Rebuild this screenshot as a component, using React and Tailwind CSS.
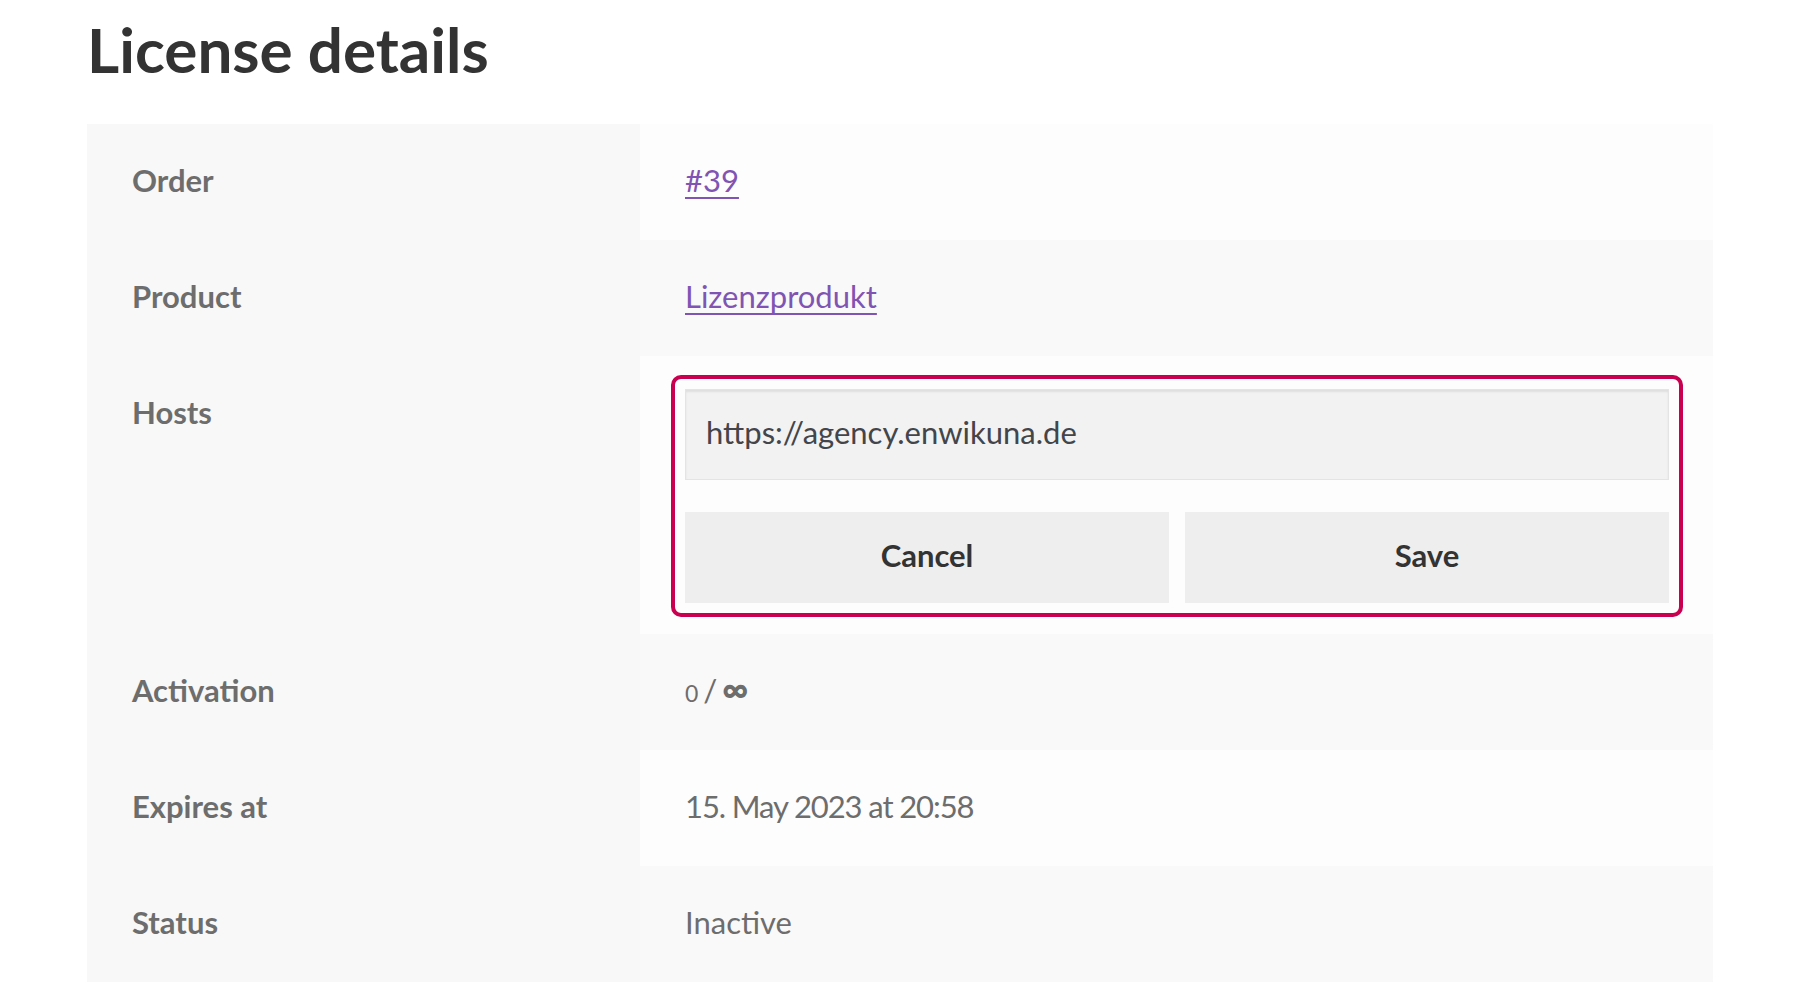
const rows = [
  { label: 'Order', value: <a href="#" className="text-[#7f54b3] underline underline-offset-[5px] decoration-2">#39</a> },
  { label: 'Product', value: <a href="#" className="text-[#7f54b3] underline underline-offset-[5px] decoration-2">Lizenzprodukt</a> },
  { label: 'Hosts', hosts: true },
  {
    label: 'Activation',
    value: (
      <span className="inline-flex h-[46px] items-baseline">
        <span className="text-[23px] leading-none">0</span>
        <span className="px-[5px] leading-none">/</span>
        <span className="text-[36px] font-black leading-none">∞</span>
      </span>
    ),
  },
  { label: 'Expires at', value: <span className="tracking-[-1.1px]">15. May 2023 at 20:58</span> },
  { label: 'Status', value: 'Inactive' },
]

function HostsForm() {
  return (
    <div className="-mx-[14px] -my-[14px] rounded-[10px] border-4 border-[#c8004f] p-[10px]">
      <input
        type="text"
        defaultValue="https://agency.enwikuna.de"
        className="block h-[91px] w-full border border-[#e4e4e4] bg-[#f2f2f2] px-[20px] pb-[6px] text-[31px] text-[#43454b] shadow-[inset_0_2px_2px_rgba(0,0,0,0.08)] outline-none"
      />
      <div className="mt-[32px] grid grid-cols-2 gap-4">
        <button type="button" className="h-[91px] bg-[#eeeeee] pb-[6px] text-[31px] font-bold text-[#333333]">
          Cancel
        </button>
        <button type="button" className="h-[91px] bg-[#eeeeee] pb-[6px] text-[31px] font-bold text-[#333333]">
          Save
        </button>
      </div>
    </div>
  )
}

export default function App() {
  return (
    <div className="min-h-screen bg-white pl-[87px] pr-[87px] font-['Lato',sans-serif]">
      <h1 className="pt-[12px] text-[62px] font-bold leading-[1.2] text-[#333333]">License details</h1>

      <div className="mt-[38px] grid w-[1626px] grid-cols-[553px_1fr]">
        {rows.map((row, i) => (
          <div key={row.label} className="contents">
            <div className="bg-[#f8f8f8] pb-[37px] pl-[45px] pt-[33px] text-[31px] font-bold leading-[46px] text-[#6d6d6d]">
              {row.label}
            </div>
            <div
              className={`pl-[45px] pr-[44px] pt-[33px] text-[31px] leading-[46px] text-[#6d6d6d] ${
                row.hosts ? 'pb-[31px]' : 'pb-[37px]'
              } ${i % 2 === 0 ? 'bg-[#fdfdfd]' : 'bg-[#f9f9f9]'}`}
            >
              {row.hosts ? <HostsForm /> : <div className="h-[46px]">{row.value}</div>}
            </div>
          </div>
        ))}
      </div>
    </div>
  )
}
